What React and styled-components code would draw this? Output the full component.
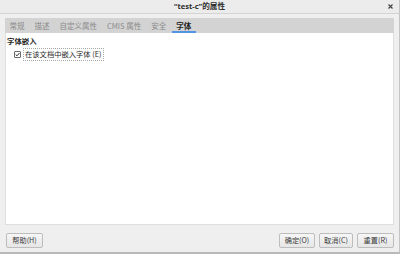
import React from "react";
import styled, { createGlobalStyle } from "styled-components";

const Global = createGlobalStyle`
  html, body { margin: 0; padding: 0; background: #efefef; }
  body { font-family: "Noto Sans CJK SC", "Noto Sans", sans-serif; }
`;

const Window = styled.div`
  width: 400px;
  height: 254px;
  box-sizing: border-box;
  background: #efefef;
  display: flex;
  flex-direction: column;
  border-right: 1px solid #c4c4c4;
  border-bottom: 2px solid #b9b9b9;
  overflow: hidden;
`;

const TitleBar = styled.div`
  height: 13px;
  flex: none;
  background: #ececec;
  border-bottom: 1px solid #d4d4d4;
  display: flex;
  align-items: center;
  justify-content: center;
  position: relative;
`;

const Title = styled.div`
  font-family: "Noto Sans", "Noto Sans CJK SC", sans-serif;
  font-size: 7.6px;
  font-weight: 700;
  color: #2e2e2e;
  line-height: 1;
`;

const Close = styled.svg`
  position: absolute;
  right: 6px;
  top: 4px;
`;

const Body = styled.div`
  flex: 1;
  display: flex;
  flex-direction: column;
  padding: 4px 5px 0 5px;
`;

const TabBar = styled.div`
  height: 15px;
  flex: none;
  background: #d3d3d3;
  display: flex;
  align-items: stretch;
  padding-left: 0;
  gap: 1px;
`;

const Tab = styled.div`
  padding: 0 2.5px;
  font-size: 7.5px;
  line-height: 1;
  display: flex;
  align-items: center;
  color: ${(p) => (p.$active ? "#1e1e1e" : "#8a8a8a")};
  font-weight: ${(p) => (p.$active ? 700 : 400)};
  border-bottom: 2px solid ${(p) => (p.$active ? "#5294e2" : "transparent")};
  box-sizing: border-box;
  padding-top: 2px;
  white-space: nowrap;
`;

const TabInner = styled.span`
  padding: 0 2px;
`;

const Panel = styled.div`
  height: 192px;
  flex: none;
  background: #ffffff;
  border: 1px solid #dedede;
  border-top: none;
  box-sizing: border-box;
  padding: 4px 1px;
`;

const SectionTitle = styled.div`
  font-size: 7.4px;
  font-weight: 700;
  color: #1e1e1e;
  line-height: 1;
`;

const CheckRow = styled.div`
  display: flex;
  align-items: center;
  gap: 2px;
  margin-top: 4px;
  padding-left: 7px;
`;

const Box = styled.div`
  width: 5px;
  height: 5px;
  border: 1px solid #6a6a6a;
  border-radius: 1px;
  background: #fff;
  display: flex;
  align-items: center;
  justify-content: center;
`;

const Label = styled.div`
  font-size: 7.3px;
  color: #2a2a2a;
  line-height: 1;
  padding: 1.5px 1px;
  border: 1px dotted #a8a8a8;
`;

const Footer = styled.div`
  display: flex;
  align-items: center;
  padding: 8px 0 0 1px;
  gap: 4px;
`;

const Spacer = styled.div`
  flex: 1;
`;

const Button = styled.div`
  height: 15px;
  box-sizing: border-box;
  padding: 0 4px;
  border: 1px solid #bdbdbd;
  border-radius: 2px;
  background: linear-gradient(#f6f6f6, #e6e6e6);
  font-size: 7.2px;
  color: #3a3a3a;
  display: flex;
  align-items: center;
  justify-content: center;
  line-height: 1;
  min-width: ${(p) => p.$w}px;
`;

const tabs = ["常规", "描述", "自定义属性", "CMIS 属性", "安全", "字体"];

export default function App() {
  return (
    <>
      <Global />
      <Window>
        <TitleBar>
          <Title>“test-c”的属性</Title>
          <Close width="5" height="5" viewBox="0 0 5 5">
            <path d="M0.5 0.5 L4.5 4.5 M4.5 0.5 L0.5 4.5" stroke="#444" strokeWidth="1.2" />
          </Close>
        </TitleBar>
        <Body>
          <TabBar>
            {tabs.map((t, i) => (
              <Tab key={t} $active={i === tabs.length - 1}>
                <TabInner>{t}</TabInner>
              </Tab>
            ))}
          </TabBar>
          <Panel>
            <SectionTitle>字体嵌入</SectionTitle>
            <CheckRow>
              <Box>
                <svg width="5" height="5" viewBox="0 0 6 6">
                  <path d="M0.8 3 L2.4 4.6 L5.3 1.2" fill="none" stroke="#333" strokeWidth="1.2" />
                </svg>
              </Box>
              <Label>在该文档中嵌入字体 (E)</Label>
            </CheckRow>
          </Panel>
          <Footer>
            <Button $w={37}>帮助(H)</Button>
            <Spacer />
            <Button $w={36}>确定(O)</Button>
            <Button $w={34}>取消(C)</Button>
            <Button $w={37}>重置(R)</Button>
          </Footer>
        </Body>
      </Window>
    </>
  );
}
